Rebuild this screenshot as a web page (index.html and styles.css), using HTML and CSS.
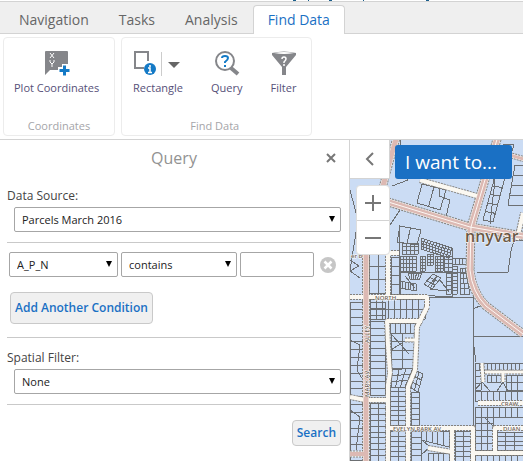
FILE: index.html
```html
<!DOCTYPE html>
<html lang="en">
<head>
<meta charset="utf-8">
<title>Find Data</title>
<link rel="stylesheet" href="styles.css">
</head>
<body>
<header class="banner"><svg class="banner-marks" width="140" height="1" aria-hidden="true"><path d="M0 0h3M15 0h1M36 0h3M70 0h1M133 0h3" stroke="#1b5f8c" stroke-width="2"/></svg></header>
<nav class="tabs">
  <button class="tab">Navigation</button>
  <button class="tab">Tasks</button>
  <button class="tab">Analysis</button>
  <button class="tab tab-active">Find Data</button>
</nav>
<section class="ribbon">
  <div class="group">
    <div class="tools">
      <button class="tool">
        <svg width="26" height="26" viewBox="0 0 26 26" aria-hidden="true"><path fill="#85868a" d="M2 1h21q1 0 1 1v12h-6v3h-4v3H6l-5 5V2q0-1 1-1z"/><path d="M6 3l4 5M10 3L6 8M6 10v2l2 2 2-2v-2M8 14v3" fill="none" stroke="#fff"/><path d="M20.500 15.500v10M15.500 20.500h10" stroke="#147ac6" stroke-width="3"/></svg>
        <span>Plot Coordinates</span>
      </button>
    </div>
    <div class="group-name">Coordinates</div>
  </div>
  <div class="group group-find">
    <div class="tools">
      <button class="tool">
        <svg width="50" height="26" viewBox="0 0 50 26" aria-hidden="true"><path d="M11 18H2V2h13v9" fill="none" stroke="#85868a" stroke-width="2"/><circle cx="17" cy="19" r="6" fill="#147ac6"/><path d="M17 15v2M15 18h2v5M15 22.500h4" fill="none" stroke="#fff" stroke-width="1.500"/><path d="M28.500 2v24" stroke="#ccc"/><path d="M35 12h12l-6 6z" fill="#666"/></svg>
        <span>Rectangle</span>
      </button>
      <button class="tool">
        <svg width="26" height="26" viewBox="0 0 26 26" aria-hidden="true"><circle cx="11" cy="11" r="9" fill="#fff" stroke="#85868a" stroke-width="2"/><path d="M17 18l7 6" stroke="#85868a" stroke-width="4"/><path d="M8 8q0-2 3-2t3 2q0 2-3 4v1M11 15v2" fill="none" stroke="#147ac6" stroke-width="2"/></svg>
        <span>Query</span>
      </button>
      <button class="tool">
        <svg width="26" height="26" viewBox="0 0 26 26" aria-hidden="true"><path d="M1 3q12-3 24 0v2l-10 12v8h-4v-8L1 5z" fill="#85868a"/><path d="M3 3q10-2 20 0-10 2-20 0z" fill="#fff"/><path d="M11 9q0-2 2-2t2 2q0 1-2 3v1M13 14v2" fill="none" stroke="#fff" stroke-width="1.500"/></svg>
        <span>Filter</span>
      </button>
    </div>
    <div class="group-name">Find Data</div>
  </div>
</section>
<main class="workspace">
  <form class="panel">
    <div class="panel-head">
      <h1>Query</h1>
      <button type="button" class="close" aria-label="Close"><svg width="10" height="10" viewBox="0 0 10 10"><path d="M1 1l8 8M9 1L1 9" stroke="#777" stroke-width="2"/></svg></button>
    </div>
    <section class="block">
      <label for="source">Data Source:</label>
      <div class="select wide"><select id="source"><option>Parcels March 2016</option></select></div>
    </section>
    <section class="block conditions">
      <div class="condition">
        <div class="select field"><select aria-label="Field"><option>A_P_N</option></select></div>
        <div class="select operator"><select aria-label="Operator"><option>contains</option></select></div>
        <input class="value" type="text" aria-label="Value">
        <button type="button" class="remove" aria-label="Remove condition"><svg width="16" height="16" viewBox="0 0 16 16"><circle cx="8" cy="8" r="8" fill="#c6c6c6"/><path d="M4.500 4.500l7 7M11.500 4.500l-7 7" stroke="#fff" stroke-width="2.500"/></svg></button>
      </div>
      <button type="button" class="action add">Add Another Condition</button>
    </section>
    <section class="block spatial">
      <label for="spatial">Spatial Filter:</label>
      <div class="select wide"><select id="spatial"><option>None</option></select></div>
    </section>
    <div class="submit"><button type="button" class="action">Search</button></div>
  </form>
  <section class="map">
    <svg class="map-canvas" viewBox="350 140 173 321" preserveAspectRatio="xMinYMin slice" role="img" aria-label="Parcel map">
      <g id="parcels" class="parcels"></g>
      <g id="roads" fill="none" stroke-linejoin="round"></g>
      <g class="street-names">
        <text class="city" x="465" y="242">nnyvar</text>
        <text x="351" y="258">er B</text>
        <text x="393" y="431">EVELYN  PARK  AV</text>
        <text x="501" y="406">CRAW</text>
        <text x="503" y="431">DUAN</text>
        <text x="375" y="300">NORTH</text>
        <text transform="translate(369 343) rotate(-90)">ALLEY</text>
        <text transform="translate(369 397) rotate(-90)">MARY AV</text>
      </g>
    </svg>
    <button class="collapse" aria-label="Collapse panel"><svg width="12" height="14" viewBox="0 0 12 14"><path d="M9 1L3 7l6 6" fill="none" stroke="#777" stroke-width="2"/></svg></button>
    <div class="zoom">
      <button aria-label="Zoom in"><svg width="16" height="16" viewBox="0 0 16 16"><path d="M8 0v16M0 8h16" stroke="#777" stroke-width="2"/></svg></button>
      <button aria-label="Zoom out"><svg width="16" height="16" viewBox="0 0 16 16"><path d="M0 8h16" stroke="#777" stroke-width="2"/></svg></button>
    </div>
    <button class="want">I want to...</button>
  </section>
</main>
<script src="map.js"></script>
</body>
</html>
```

FILE: styles.css
```css
* { box-sizing: border-box; }
body {
  margin: 0;
  min-height: 100vh;
  display: flex;
  flex-direction: column;
  background: #fff;
  color: #444;
  font: 12px/16px "Open Sans", "Noto Sans", sans-serif;
}
button, select, input { font: inherit; color: inherit; margin: 0; }
button { border: 0; padding: 0; background: none; }
svg { display: block; }

.banner { height: 1px; padding-left: 293px; }
.tabs {
  display: flex;
  height: 33px;
  padding: 3px 4px 0;
  background: #efefef;
  border-top: 1px solid #d3d3d3;
  box-shadow: inset 0 -1px #d3d3d3;
}
.tab { padding: 0 14px; font-size: 14px; color: #666; border: 1px solid transparent; border-bottom: 0; }
.tab-active { background: #fff; color: #1a70c4; border-color: #d3d3d3; border-radius: 4px 4px 0 0; }

.ribbon { display: flex; gap: 6px; padding: 3px; border-bottom: 1px solid #d3d3d3; }
.group {
  display: flex;
  flex-direction: column;
  justify-content: space-between;
  min-width: 112px;
  height: 99px;
  padding: 12px 10px 1px;
  border: 1px solid #ececec;
  border-radius: 4px;
}
.group-find { padding-left: 11px; padding-right: 14px; }
.tools { display: flex; gap: 28px; }
.tool { display: flex; flex-direction: column; align-items: center; gap: 4px; font-size: 11px; color: #565078; }
.group-name { text-align: center; font-size: 11px; color: #a5a5a9; }

.workspace { display: flex; flex: 1; }
.panel { width: 350px; padding: 0 8px 0 7px; border-right: 1px solid #d3d3d3; }
.panel-head { display: grid; grid-template-columns: 20px 1fr 20px; align-items: center; height: 36px; }
.panel-head h1 { grid-column: 2; margin: 0; text-align: center; font-size: 16px; font-weight: 400; color: #929292; }
.close { display: flex; justify-content: center; }
.block { padding-bottom: 10px; border-bottom: 1px solid #c9c9c9; }
.block label { display: block; height: 19px; }
.panel-head + .block { padding-top: 12px; }
.select { position: relative; }
.select::after {
  content: "";
  position: absolute;
  right: 6px;
  top: 9px;
  border: 3px solid transparent;
  border-top: 6px solid #000;
  border-bottom: 0;
  pointer-events: none;
}
select, .value {
  display: block;
  width: 100%;
  height: 25px;
  padding: 0 7px;
  appearance: none;
  background: #fff;
  border: 1px solid #a6a6a6;
  border-radius: 2px;
  font-size: 11px;
  color: #222;
}
.wide { margin-left: 7px; }
.conditions { padding: 9px 0 13px; }
.condition { display: flex; align-items: center; gap: 3px; padding: 0 5px 0 2px; }
.field { width: 109px; }
.operator { width: 116px; }
.value { flex: 1; width: 0; }
.remove { margin-left: 3px; }
.action {
  padding: 4px;
  background: #f0f0f0;
  border: 1px solid #c9c9c9;
  border-radius: 4px;
  font-weight: 600;
  color: #1a70c4;
}
.add { height: 32px; margin: 15px 0 0 3px; }
.spatial { padding-top: 12px; }
.submit { display: flex; justify-content: flex-end; padding-top: 15px; }

.map { position: relative; flex: 1; overflow: hidden; background: #cbdcf4; }
.map-canvas { position: absolute; width: 100%; height: 100%; }
.parcels { fill: none; stroke: #6c6f72; shape-rendering: crispEdges; }
.street-names { font: 600 6px "Open Sans", sans-serif; fill: #6e6254; stroke: #fff; stroke-width: 1px; paint-order: stroke; white-space: pre; }
.street-names .city { font-size: 16px; fill: #6b5846; }
.collapse, .zoom, .want { position: absolute; }
.collapse { left: 0; top: 0; width: 40px; height: 39px; padding-left: 14px; background: #fff; border: 1px solid #d3d3d3; border-width: 0 1px 1px 0; }
.zoom { left: 6px; top: 45px; width: 34px; background: #fff; border: 1px solid #ddd; border-radius: 4px; }
.zoom button { display: flex; align-items: center; justify-content: center; width: 100%; height: 34px; }
.zoom button + button { border-top: 1px solid #d3d3d3; }
.want { left: 45px; top: 5px; width: 117px; height: 34px; padding-left: 10px; text-align: left; background: #1a70c4; color: #fff; border-radius: 3px; font-size: 19px; }
```

FILE: map.js
```js
const NS = "http://www.w3.org/2000/svg";
function addPath(parent, d, attributes) {
  const path = document.createElementNS(NS, "path");
  path.setAttribute("d", d);
  for (const name in attributes) path.setAttribute(name, attributes[name]);
  parent.appendChild(path);
}

// Parcel blocks: four corners clockwise from top left, columns, rows.
const blocks = [
  [[350,302],[363,302],[363,460],[350,460],1,20],
  [[370,302],[385,302],[385,395],[370,395],1,14],
  [[370,403],[386,403],[386,461],[370,461],2,10],
  [[370,299],[425,299],[425,319],[370,319],9,2],
  [[390,323],[415,323],[415,333],[390,333],5,1],
  [[391,333],[414,333],[414,368],[391,368],2,4],
  [[392,370],[413,368],[405,387],[391,387],3,3],
  [[390,387],[406,387],[406,425],[390,425],2,8],
  [[415,370],[423,374],[418,392],[411,388],2,3],
  [[411,392],[419,392],[419,425],[411,425],1,6],
  [[390,431],[406,431],[406,461],[390,461],2,6],
  [[411,431],[421,431],[421,461],[411,461],1,5],
  [[421,431],[449,431],[449,447],[421,440],5,1],
  [[428,453],[449,453],[449,461],[428,461],4,1],
  [[455,431],[471,431],[471,461],[455,461],2,6],
  [[369,253],[387,253],[387,293],[369,293],2,3],
  [[391,257],[400,257],[400,294],[391,294],1,4],
  [[452,258],[466,258],[466,264],[452,264],4,1],
  [[452,266],[457,266],[457,294],[452,294],1,8],
  [[475,363],[523,363],[523,370],[475,370],12,1],
  [[475,370],[481,370],[481,390],[475,390],1,3],
  [[487,375],[501,375],[501,382],[487,382],3,1],
  [[506,375],[523,375],[523,390],[506,390],3,2],
  [[475,391],[523,391],[523,401],[475,401],8,1],
  [[475,407],[523,407],[523,417],[475,417],8,1],
  [[475,417],[493,417],[493,450],[475,450],3,5],
  [[497,432],[523,432],[523,450],[497,450],3,4],
  [[475,455],[523,455],[523,461],[475,461],8,1],
  [[504,144],[514,144],[493,222],[483,220],1,9],
  [[515,165],[523,165],[523,205],[508,205],1,4],
  [[422,184],[446,190],[440,210],[417,203],2,1],
  [[400,226],[421,230],[417,245],[397,242],2,1],
  [[402,243],[418,243],[418,254],[402,254],4,3],
  [[421,238],[452,248],[449,258],[421,249],10,4],
  [[400,256],[416,256],[416,271],[400,271],5,4],
  [[420,256],[425,256],[425,271],[420,271],2,5],
  [[427,254],[433,254],[433,265],[427,265],2,4],
  [[435,256],[443,256],[443,271],[435,271],3,5],
  [[444,256],[452,256],[452,271],[444,271],2,4],
  [[408,273],[422,273],[419,280],[410,279],5,1],
  [[433,274],[441,278],[432,289],[424,284],2,3],
  [[400,281],[416,284],[416,291],[400,288],6,1],
  [[446,273],[451,273],[451,294],[446,294],1,5],
  [[460,268],[465,268],[470,294],[460,294],2,5]
];
const mix = (a, b, t) => [a[0] + (b[0] - a[0]) * t, a[1] + (b[1] - a[1]) * t];
let grid = "";
for (const [a, b, c, d, columns, rows] of blocks) {
  for (let i = 0; i <= columns; i++) grid += `M${mix(a, b, i / columns)}L${mix(d, c, i / columns)}`;
  for (let i = 0; i <= rows; i++) grid += `M${mix(a, d, i / rows)}L${mix(b, c, i / rows)}`;
}
const parcels = document.getElementById("parcels");
addPath(parcels, grid);
addPath(parcels, "M428 297H473V428H419V392M473 240V363M473 309L482 305M477 272H508L511 251L514 240H523M473 336H523M473 340L476 362M399 225V294M399 272H465M452 248V298M399 294L470 298M400 140L408 180L392 186M439 184V196L450 200L446 217M484 172L495 180L490 224M390 225L400 210M350 190L358 220L350 270M350 260L359 266L350 271L360 278M350 340L360 345L357 370L363 380M350 410L360 417L356 450M391 350L408 339M392 335L409 354M422 440L430 447L421 455M475 390L482 382L490 391M497 391L503 382L508 391M484 417L494 427M405 276L415 288M437 276L430 289L446 291M440 280L449 292");

const major = [
  ["M366 461V250L390 160L397 136", 5],
  ["M385 201L470 227L523 236", 6],
  ["M498 136L471 227L470 270Q472 292 486 306L523 334", 6],
  ["M503 153L527 160", 3],
  ["M350 454H366", 4]
];
const minor = [
  ["M420 180L477 196", 3], ["M388 253V297M388 253H399", 3],
  ["M350 297H427V307L417 327L416 350L415 370L408 387V461", 3],
  ["M422 321H387L388 345L390 373L388 385V461", 3],
  ["M350 397L365 400H388", 3], ["M388 428H473V461M452 428V461", 3],
  ["M482 363L483 382M485 372H523M503 372V382", 2],
  ["M478 403H523", 3], ["M523 428H495V452M475 453H523M428 448L452 452", 3],
  ["M517 240L523 213", 3], ["M405 340H416", 2]
];
const roads = document.getElementById("roads");
for (const [d, width] of [...major, ...minor]) addPath(roads, d, { stroke: "#85827d", "stroke-width": width + 3, "stroke-dasharray": "2 1" });
for (const [d, width] of [...major, ...minor]) addPath(roads, d, { stroke: "#fbf8f1", "stroke-width": width + 1 });
for (const [d, width] of major) addPath(roads, d, { stroke: "#dcb9b3", "stroke-width": width });
for (const [d, width] of major.slice(1, 3)) addPath(roads, d, { stroke: "#fdf8f4", "stroke-width": 1 });
```
